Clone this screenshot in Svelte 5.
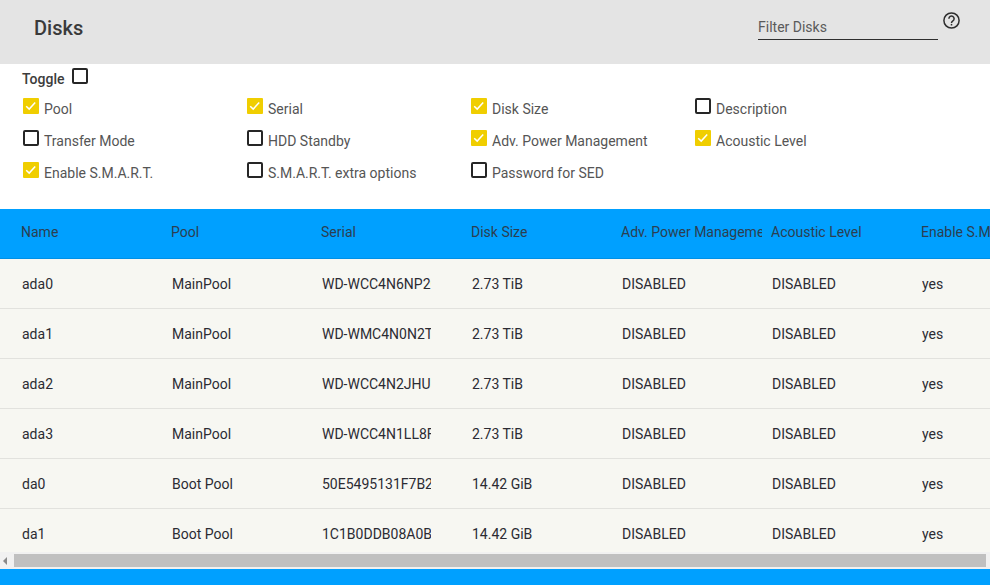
<script>
  const opts = [
    ['Pool', true], ['Serial', true], ['Disk Size', true], ['Description', false],
    ['Transfer Mode', false], ['HDD Standby', false], ['Adv. Power Management', true], ['Acoustic Level', true],
    ['Enable S.M.A.R.T.', true], ['S.M.A.R.T. extra options', false], ['Password for SED', false]
  ];
  const cols = ['Name', 'Pool', 'Serial', 'Disk Size', 'Adv. Power Management', 'Acoustic Level', 'Enable S.M.A.R.T.'];
  const rows = [
    ['ada0', 'MainPool', 'WD-WCC4N6NP2C0X', '2.73 TiB'],
    ['ada1', 'MainPool', 'WD-WMC4N0N2TK7A', '2.73 TiB'],
    ['ada2', 'MainPool', 'WD-WCC4N2JHU3AE', '2.73 TiB'],
    ['ada3', 'MainPool', 'WD-WCC4N1LL8F4P', '2.73 TiB'],
    ['da0', 'Boot Pool', '50E5495131F7B2C1', '14.42 GiB'],
    ['da1', 'Boot Pool', '1C1B0DDB08A0B2F3', '14.42 GiB']
  ];
</script>

<div class="page">
  <header class="top">
    <h1>Disks</h1>
    <div class="filter">Filter Disks</div>
    <svg class="help" width="17" height="17" viewBox="0 0 17 17" fill="none" stroke="#2e2e2e" aria-hidden="true">
      <circle cx="8.5" cy="8.5" r="7.6" stroke-width="1.5" />
      <path d="M5.9 6.7a2.6 2.6 0 1 1 4 2.2c-.9.6-1.4 1-1.4 2.2" stroke-width="1.5" />
      <path d="M8.5 11.9v1.6" stroke-width="1.5" />
    </svg>
  </header>

  <section class="toggles">
    <div class="toggle-all">
      <strong>Toggle</strong>
      <span class="box"></span>
    </div>
    <div class="grid">
      {#each opts as [label, on]}
        <div class="opt">
          {#if on}
            <span class="box on">
              <svg width="16" height="16" viewBox="0 0 16 16" fill="none" aria-hidden="true"><path d="M3.2 8.2l3 2.9 6-6.6" stroke="#fff" stroke-width="1.5" /></svg>
            </span>
          {:else}
            <span class="box"></span>
          {/if}
          <span class="label">{label}</span>
        </div>
      {/each}
    </div>
  </section>

  <section class="table">
    <div class="row head">
      {#each cols as c}<div class="cell"><span class="txt">{c}</span></div>{/each}
    </div>
    <div class="body">
      {#each rows as r}
        <div class="row data">
          {#each r as v}<div class="cell"><span class="txt">{v}</span></div>{/each}
          <div class="cell"><span class="txt">DISABLED</span></div>
          <div class="cell"><span class="txt">DISABLED</span></div>
          <div class="cell"><span class="txt">yes</span></div>
        </div>
      {/each}
    </div>
  </section>

  <div class="scrollbar">
    <span class="arrow"></span>
    <span class="thumb"></span>
  </div>
  <div class="footer"></div>
</div>

<style>
  :global(body) {
    margin: 0;
    background: #fff;
  }
  .page {
    width: 990px;
    height: 585px;
    overflow: hidden;
    font-family: Roboto, "Liberation Sans", sans-serif;
    font-size: 14px;
    color: #3c3c3c;
  }
  .top {
    height: 64px;
    background: #e4e4e4;
    display: flex;
    align-items: flex-start;
    box-sizing: border-box;
    padding-left: 34px;
  }
  h1 {
    margin: 16px 0 0;
    font-size: 20px;
    line-height: 24px;
    font-weight: 500;
    color: #3a3a3a;
    flex: 1;
  }
  .filter {
    width: 180px;
    height: 40px;
    box-sizing: border-box;
    padding-top: 18px;
    line-height: 18px;
    border-bottom: 1px solid #2f2f2f;
    color: #5a5a5a;
    font-size: 14px;
    margin-left: -1px;
  }
  .help {
    margin: 12px 30px 0 5px;
  }
  .toggles {
    height: 145px;
    box-sizing: border-box;
    padding: 4px 0 0 23px;
  }
  .toggle-all {
    height: 16px;
    display: flex;
    align-items: flex-start;
    gap: 8px;
    margin-left: -1px;
  }
  .toggle-all strong {
    font-weight: 500;
    font-size: 14px;
    line-height: 16px;
    margin-top: 3px;
    color: #3c3c3c;
  }
  .grid {
    display: grid;
    grid-template-columns: repeat(4, 224px);
    grid-auto-rows: 32px;
    margin-top: 14px;
  }
  .opt {
    display: flex;
    align-items: flex-start;
    gap: 5px;
  }
  .box {
    width: 16px;
    height: 16px;
    box-sizing: border-box;
    border: 2px solid #262626;
    border-radius: 2px;
    flex: none;
    display: block;
  }
  .box.on {
    border: 0;
    border-radius: 1px;
    background: #f0ce00;
  }
  .box svg {
    display: block;
  }
  .label {
    line-height: 16px;
    margin-top: 3px;
    color: #555;
  }
  .table {
    overflow: hidden;
  }
  .row {
    display: flex;
    box-sizing: border-box;
    height: 50px;
    width: 990px;
    overflow: hidden;
  }
  .cell {
    width: 150px;
    box-sizing: border-box;
    flex: none;
  }
  .txt {
    display: block;
    white-space: nowrap;
    overflow: hidden;
  }
  .head {
    background: #00a0ff;
    color: #2c3e50;
    border-bottom: 1px solid #0090e6;
  }
  .head .cell {
    padding-left: 21px;
    line-height: 46px;
  }
  .head .txt {
    width: 141px;
  }
  .body {
    height: 293px;
    overflow: hidden;
    background: #f7f7f2;
  }
  .data {
    border-bottom: 1px solid #e2e2de;
    color: #2b2b33;
  }
  .data .cell {
    padding-left: 22px;
    line-height: 50px;
  }
  .data .txt {
    width: 109px;
  }
  .scrollbar {
    height: 17px;
    background: #f1f1f1;
    display: flex;
    align-items: center;
    box-sizing: border-box;
    padding-right: 4px;
  }
  .arrow {
    width: 0;
    height: 0;
    margin-left: 3px;
    border: 4px solid transparent;
    border-left: 0;
    border-right: 4px solid #8a8a8a;
  }
  .thumb {
    flex: 1;
    height: 13px;
    margin-left: 7px;
    background: #c0c0c0;
  }
  .footer {
    height: 16px;
    background: #00a0ff;
  }
</style>
